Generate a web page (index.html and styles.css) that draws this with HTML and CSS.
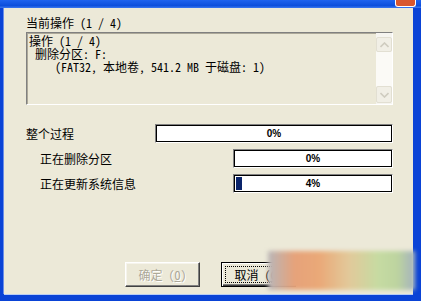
FILE: index.html
```html
<!DOCTYPE html>
<html lang="zh-CN">
<head>
<meta charset="utf-8">
<title>删除分区</title>
<link rel="stylesheet" href="styles.css">
</head>
<body>
<div class="frame">
  <div class="titlebar">
    <span class="title-close"></span>
  </div>
  <div class="client">
    <div class="caption">当前操作 (1 / 4)</div>
    <div class="editbox">
      <div class="edit-text">
        <div class="line">操作 (1 / 4)</div>
        <div class="line indent1">删除分区: F:</div>
        <div class="line indent2">(FAT32, 本地卷, 541.2 MB 于磁盘: 1)</div>
      </div>
      <div class="scrollbar">
        <div class="sb-btn">
          <svg width="9" height="6" viewBox="0 0 9 6"><path d="M0.5 5 L4.5 1 L8.5 5" fill="none" stroke="#cfccc0" stroke-width="1.6"/></svg>
        </div>
        <div class="sb-track"></div>
        <div class="sb-btn">
          <svg width="9" height="6" viewBox="0 0 9 6"><path d="M0.5 1 L4.5 5 L8.5 1" fill="none" stroke="#cfccc0" stroke-width="1.6"/></svg>
        </div>
      </div>
    </div>

    <div class="progress-rows">
      <div class="prow">
        <span class="plabel">整个过程</span>
        <div class="pbar wide"><span class="pfill" style="width:0%"></span><span class="ptext">0%</span></div>
      </div>
      <div class="prow sub">
        <span class="plabel">正在删除分区</span>
        <div class="pbar narrow"><span class="pfill" style="width:0%"></span><span class="ptext">0%</span></div>
      </div>
      <div class="prow sub">
        <span class="plabel">正在更新系统信息</span>
        <div class="pbar narrow"><span class="pfill" style="width:4%"></span><span class="ptext">4%</span></div>
      </div>
    </div>

    <div class="buttons">
      <button class="btn disabled" disabled>确定 (<u>O</u>)</button>
      <button class="btn default"><span class="focus">取消 (<u>C</u>)</span></button>
    </div>
  </div>
  <div class="watermark"></div>
</div>
</body>
</html>
```

FILE: styles.css
```css
html, body {
  margin: 0;
  padding: 0;
  background: #ece9d8;
}

.frame {
  position: relative;
  width: 421px;
  height: 301px;
  display: flex;
  flex-direction: column;
  background: #0a43d6;
  overflow: hidden;
  font-family: "Noto Sans Mono CJK SC", "Noto Sans CJK SC", "Liberation Sans", sans-serif;
  font-size: 12px;
  color: #000;
}

.titlebar {
  height: 8px;
  flex: none;
  display: flex;
  justify-content: flex-end;
  background: linear-gradient(#1f63ee, #0d4fdc 70%, #3b78f0);
}

.title-close {
  width: 19px;
  height: 6px;
  margin-right: 5px;
  background: #d9572e;
  border: 1px solid #fff;
  border-top: none;
  border-radius: 0 0 3px 3px;
}

.client {
  flex: 1;
  display: flex;
  flex-direction: column;
  margin: 0 8px 7px 4px;
  padding: 0 20px 0 22px;
  background: #ece9d8;
  box-shadow: -1px 0 0 #6b8ee8, 0 1px 0 #b8cdf5;
}

.caption {
  margin-top: 6px;
  height: 18px;
  line-height: 18px;
}

.editbox {
  height: 73px;
  box-sizing: border-box;
  display: flex;
  border: 1px solid;
  border-color: #808080 #fff #fff #808080;
  box-shadow: inset 1px 1px 0 #aca899;
}

.edit-text {
  flex: 1;
  padding: 1px 0 0 2px;
  line-height: 13px;
}

.line { white-space: pre; }
.indent1 { padding-left: 6px; }
.indent2 { padding-left: 26px; }

.scrollbar {
  width: 16px;
  display: flex;
  flex-direction: column;
  padding: 4px 0 1px;
  background: #f6f5f0;
}

.sb-btn {
  height: 13px;
  display: flex;
  align-items: center;
  justify-content: center;
  background: #f1efe6;
  border: 1px solid #e2dfd2;
  border-radius: 2px;
}

.sb-btn + .sb-track + .sb-btn { height: 15px; }

.sb-track {
  flex: 1;
  background: #fbfaf6;
}

.progress-rows {
  margin-top: 19px;
  display: flex;
  flex-direction: column;
  gap: 6px;
}

.prow {
  display: flex;
  align-items: center;
  justify-content: space-between;
  height: 19px;
}

.prow.sub .plabel { padding-left: 14px; }

.pbar {
  position: relative;
  height: 19px;
  box-sizing: border-box;
  background: #fff;
  border: 1px solid;
  border-color: #808080 #fff #fff #808080;
  box-shadow: inset 0 0 0 1px #000;
  display: flex;
  align-items: center;
  justify-content: center;
  padding: 2px;
}

.pbar.wide { width: 238px; }
.pbar.narrow { width: 160px; }

.pfill {
  position: absolute;
  left: 2px;
  top: 2px;
  bottom: 2px;
  background: #0a246a;
  max-width: calc(100% - 4px);
}

.ptext {
  position: relative;
  font-family: "Liberation Sans", sans-serif;
  font-weight: bold;
  font-size: 10px;
  color: #000;
}

.buttons {
  margin-top: auto;
  margin-bottom: 7px;
  padding-left: 99px;
  display: flex;
  gap: 21px;
}

.btn {
  width: 75px;
  height: 25px;
  box-sizing: border-box;
  padding: 0;
  font: inherit;
  font-size: 12px;
  background: #ece9d8;
  border: 1px solid;
  border-color: #fff #404040 #404040 #fff;
  box-shadow: inset -1px -1px 0 #808080, inset 1px 1px 0 #f6f4ec;
  display: flex;
  align-items: center;
  justify-content: center;
}

.btn.disabled {
  color: #aca899;
  text-shadow: 1px 1px 0 #fff;
}

.btn.default {
  border: 1px solid #000;
  box-shadow: inset 1px 1px 0 #fff, inset -1px -1px 0 #404040, inset -2px -2px 0 #808080;
  color: #000;
}

.focus {
  display: flex;
  align-items: center;
  justify-content: center;
  width: 65px;
  height: 15px;
  border: 1px dotted #000;
}

.watermark {
  position: absolute;
  left: 268px;
  top: 251px;
  width: 147px;
  height: 39px;
  background: linear-gradient(90deg, #b9b6b8 0%, #e6a27a 18%, #eaa978 35%, #e2c99a 55%, #c6dba2 75%, #bdd49f 88%, #a4b2bf 100%);
  filter: blur(2px);
}
```
